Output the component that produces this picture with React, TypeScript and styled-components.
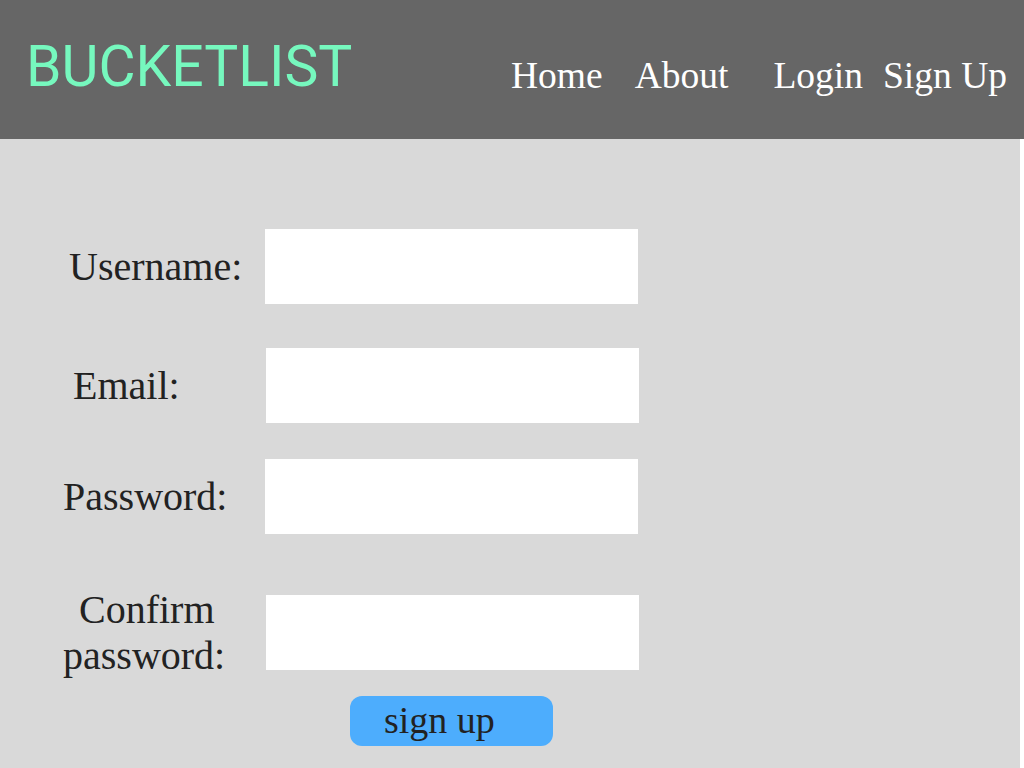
import React from "react";
import styled, { createGlobalStyle } from "styled-components";

const Global = createGlobalStyle`
  html, body { margin: 0; padding: 0; background: #ffffff; }
  body { width: 1024px; height: 768px; overflow: hidden; }
`;

const Page = styled.div`
  width: 1024px;
  height: 768px;
  display: flex;
  flex-direction: column;
`;

const Header = styled.header`
  height: 139px;
  background: #666666;
  display: flex;
  align-items: flex-start;
  justify-content: space-between;
  box-sizing: border-box;
  padding: 0 17px 0 26px;
`;

const Logo = styled.div`
  font-family: Roboto, "Liberation Sans", sans-serif;
  font-size: 57px;
  line-height: 57px;
  color: #76f8be;
  margin-top: 38px;
`;

const Nav = styled.nav`
  display: flex;
  align-items: baseline;
  margin-top: 56px;
`;

const NavLink = styled.a<{ $ml: number }>`
  font-family: "Liberation Serif", serif;
  font-size: 37.5px;
  line-height: 40px;
  color: #ffffff;
  text-decoration: none;
  margin-left: ${(p) => p.$ml}px;
`;

const Main = styled.main`
  width: 1020px;
  flex: 1;
  background: #d9d9d9;
  display: flex;
  flex-direction: column;
  box-sizing: border-box;
  padding-top: 90px;
`;

const Row = styled.div<{ $mt: number }>`
  display: flex;
  align-items: center;
  height: 75px;
  margin-top: ${(p) => p.$mt}px;
`;

const LabelBox = styled.label<{ $pl: number }>`
  width: ${(p) => 265 - p.$pl}px;
  padding-left: ${(p) => p.$pl}px;
  font-family: "Liberation Serif", serif;
  font-size: 40px;
  line-height: 46px;
  color: #222222;
  box-sizing: content-box;
  white-space: nowrap;
`;

const LabelLine = styled.span<{ $indent?: number }>`
  display: block;
  padding-left: ${(p) => p.$indent ?? 0}px;
`;

const Input = styled.input<{ $ml: number }>`
  width: 373px;
  height: 75px;
  box-sizing: border-box;
  border: none;
  background: #ffffff;
  margin-left: ${(p) => p.$ml}px;
  padding: 0;
  outline: none;
`;

const ButtonRow = styled.div`
  display: flex;
  margin-top: 26px;
  padding-left: 350px;
`;

const Button = styled.button`
  width: 203px;
  height: 50px;
  border: none;
  border-radius: 12px;
  background: #4dadfd;
  font-family: "Liberation Serif", serif;
  font-size: 38px;
  line-height: 40px;
  color: #222222;
  text-align: left;
  padding: 0 0 2px 34px;
  cursor: pointer;
`;

export default function App() {
  return (
    <Page>
      <Global />
      <Header>
        <Logo>BUCKETLIST</Logo>
        <Nav>
          <NavLink $ml={0} href="#">Home</NavLink>
          <NavLink $ml={32} href="#">About</NavLink>
          <NavLink $ml={45} href="#">Login</NavLink>
          <NavLink $ml={20} href="#">Sign Up</NavLink>
        </Nav>
      </Header>
      <Main>
        <Row $mt={0}>
          <LabelBox $pl={69}>Username:</LabelBox>
          <Input $ml={0} />
        </Row>
        <Row $mt={44}>
          <LabelBox $pl={73}>Email:</LabelBox>
          <Input $ml={1} />
        </Row>
        <Row $mt={36}>
          <LabelBox $pl={63}>Password:</LabelBox>
          <Input $ml={0} type="password" />
        </Row>
        <Row $mt={61}>
          <LabelBox $pl={63}>
            <LabelLine $indent={16}>Confirm</LabelLine>
            <LabelLine>password:</LabelLine>
          </LabelBox>
          <Input $ml={1} type="password" />
        </Row>
        <ButtonRow>
          <Button>sign up</Button>
        </ButtonRow>
      </Main>
    </Page>
  );
}
